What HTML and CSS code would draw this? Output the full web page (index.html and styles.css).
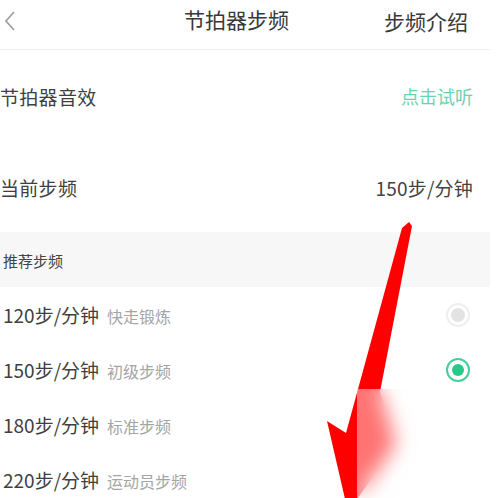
FILE: index.html
```html
<!DOCTYPE html>
<html lang="zh">
<head>
<meta charset="utf-8">
<link rel="stylesheet" href="styles.css">
</head>
<body>
<div class="page">
  <header class="nav">
    <svg class="back" width="14" height="22" viewBox="0 0 14 22"><path d="M11 2 L3 11 L11 20" fill="none" stroke="#a0a0a0" stroke-width="1.8"/></svg>
    <div class="title">节拍器步频</div>
    <div class="nav-right">步频介绍</div>
  </header>
  <div class="row big first">
    <span class="label">节拍器音效</span>
    <span class="green">点击试听</span>
  </div>
  <div class="row big">
    <span class="label">当前步频</span>
    <span class="value">150步/分钟</span>
  </div>
  <div class="section">推荐步频</div>
  <div class="row item">
    <span class="label">120步/分钟<em>快走锻炼</em></span>
    <span class="radio"></span>
  </div>
  <div class="row item">
    <span class="label">150步/分钟<em>初级步频</em></span>
    <span class="radio on"></span>
  </div>
  <div class="row item">
    <span class="label">180步/分钟<em>标准步频</em></span>
  </div>
  <div class="row item">
    <span class="label">220步/分钟<em>运动员步频</em></span>
  </div>
</div>
<svg class="arrow" width="500" height="498" viewBox="0 0 500 498">
  <polygon points="409,222 412,226 380,392 396,444 348,512 327,421 346,433 402,228" fill="#ff0000"/>
</svg>
<div class="blur"></div>
</body>
</html>
```
FILE: styles.css
```css
html, body { margin: 0; padding: 0; background: #fff; }
body {
  width: 500px; height: 498px; overflow: hidden; position: relative;
  font-family: "Noto Sans CJK SC", "Noto Sans", sans-serif;
  color: #3f3f3f;
}
.page { width: 490px; }
.nav {
  height: 49px; border-bottom: 1px solid #efefef;
  display: flex; align-items: center; position: relative;
}
.back { margin-left: 3px; margin-top: -8px; }
.title {
  position: absolute; left: 184px; top: 4px;
  font-size: 21px; color: #383838; line-height: 30px;
}
.nav-right {
  margin-left: auto; margin-right: 22px; margin-top: -8px;
  font-size: 21px; color: #383838; line-height: 30px;
}
.row {
  display: flex; align-items: center; justify-content: space-between;
  padding-right: 17px;
}
.row.big { height: 90px; font-size: 19px; }
.row.big.first { height: 92px; }
.row.big .label { letter-spacing: 0.3px; }
.green { color: #6ad2ad; font-size: 18px; }
.value { color: #444; font-size: 19px; letter-spacing: 0.2px; }
.section {
  height: 55px; background: #f7f7f7; display: flex; align-items: center;
  padding-left: 3px; font-size: 15px; color: #444; box-sizing: border-box; padding-top: 2px;
}
.row.item { height: 55px; padding-left: 3px; padding-right: 20px; }
.row.item .label { font-size: 19px; color: #3f3f3f; }
.row.item em {
  font-style: normal; font-size: 16px; color: #a5a5a5; margin-left: 8px;
}
.radio {
  width: 24px; height: 24px; border-radius: 50%; box-sizing: border-box;
  border: 2px solid #efefef; display: flex; align-items: center; justify-content: center;
}
.radio::after {
  content: ""; width: 14px; height: 14px; border-radius: 50%; background: #e3e3e3;
}
.radio.on { border-color: #45cf9b; }
.radio.on::after { background: #26c98a; width: 12px; height: 12px; }
.arrow { position: absolute; left: 0; top: 0; }
.blur {
  position: absolute; left: 357px; top: 389px; width: 133px; height: 109px;
  backdrop-filter: blur(10px); background: rgba(255,255,255,0.45);
}
```
